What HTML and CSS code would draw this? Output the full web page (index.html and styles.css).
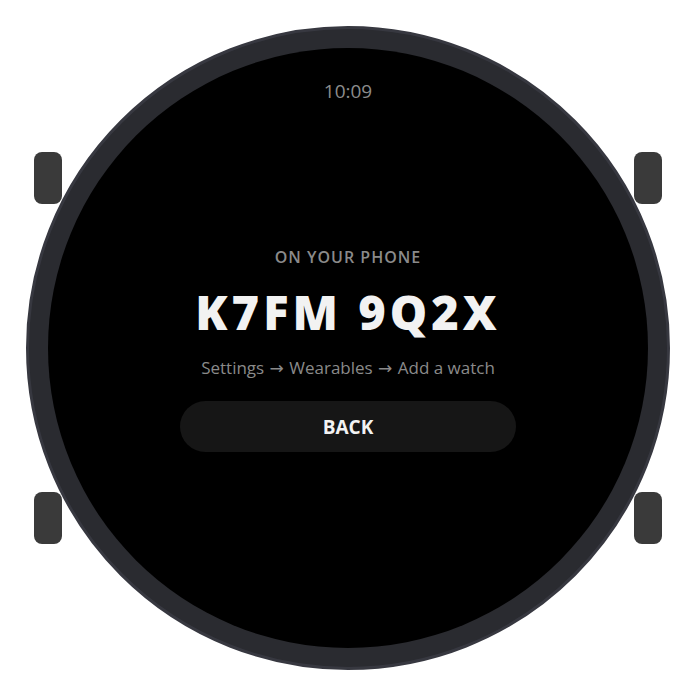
FILE: index.html
```html
<!DOCTYPE html>
<html>
<head>
<meta charset="utf-8">
<link rel="stylesheet" href="styles.css">
</head>
<body>
<div class="stage">
  <div class="watch">
    <div class="lug lug-tl"></div>
    <div class="lug lug-tr"></div>
    <div class="lug lug-bl"></div>
    <div class="lug lug-br"></div>
    <div class="bezel">
      <div class="screen">
        <div class="time">10:09</div>
        <div class="label">ON YOUR PHONE</div>
        <div class="code">K7FM 9Q2X</div>
        <div class="path">Settings <span class="arrow">→</span> Wearables <span class="arrow">→</span> Add a watch</div>
        <button class="back">BACK</button>
      </div>
    </div>
  </div>
</div>
</body>
</html>
```
FILE: styles.css
```css
html, body {
  margin: 0;
  padding: 0;
  background: #ffffff;
}
.stage {
  width: 696px;
  height: 696px;
  display: flex;
  align-items: center;
  justify-content: center;
}
.watch {
  position: relative;
  width: 644px;
  height: 644px;
}
.lug {
  position: absolute;
  width: 28px;
  height: 52px;
  border-radius: 8px;
  background: #3a3a3a;
}
.lug-tl { left: 8px; top: 126px; }
.lug-tr { right: 8px; top: 126px; }
.lug-bl { left: 8px; top: 466px; }
.lug-br { right: 8px; top: 466px; }
.bezel {
  position: relative;
  width: 644px;
  height: 644px;
  box-sizing: border-box;
  border-radius: 50%;
  background: #2a2b30;
  border: 3px solid #373840;
  padding: 19px;
}
.screen {
  width: 600px;
  height: 600px;
  border-radius: 50%;
  background: #000000;
  display: flex;
  flex-direction: column;
  align-items: center;
  font-family: "Open Sans", "Noto Sans", sans-serif;
}
.time {
  margin-top: 32px;
  font-size: 19px;
  line-height: 22px;
  color: #8c8c8c;
}
.label {
  margin-top: 145px;
  font-size: 16px;
  line-height: 20px;
  font-weight: 600;
  letter-spacing: 1px;
  color: #8a8a8a;
}
.code {
  margin-top: 18px;
  font-family: "Open Sans", sans-serif;
  font-weight: 800;
  font-size: 47px;
  line-height: 54px;
  letter-spacing: 4px;
  color: #f2f2f2;
}
.path {
  margin-top: 18px;
  height: 22px;
  font-size: 17px;
  line-height: 22px;
  color: #8a8a8a;
}
.arrow {
  font-family: "DejaVu Sans", sans-serif;
  font-size: 17px;
  line-height: 1;
  margin: 0 1px;
}
.back {
  margin-top: 22px;
  width: 336px;
  height: 51px;
  border: none;
  border-radius: 26px;
  background: #161616;
  color: #f2f2f2;
  font-family: "Open Sans", "Noto Sans", sans-serif;
  font-weight: 700;
  font-size: 19px;
  padding: 0;
}
```
